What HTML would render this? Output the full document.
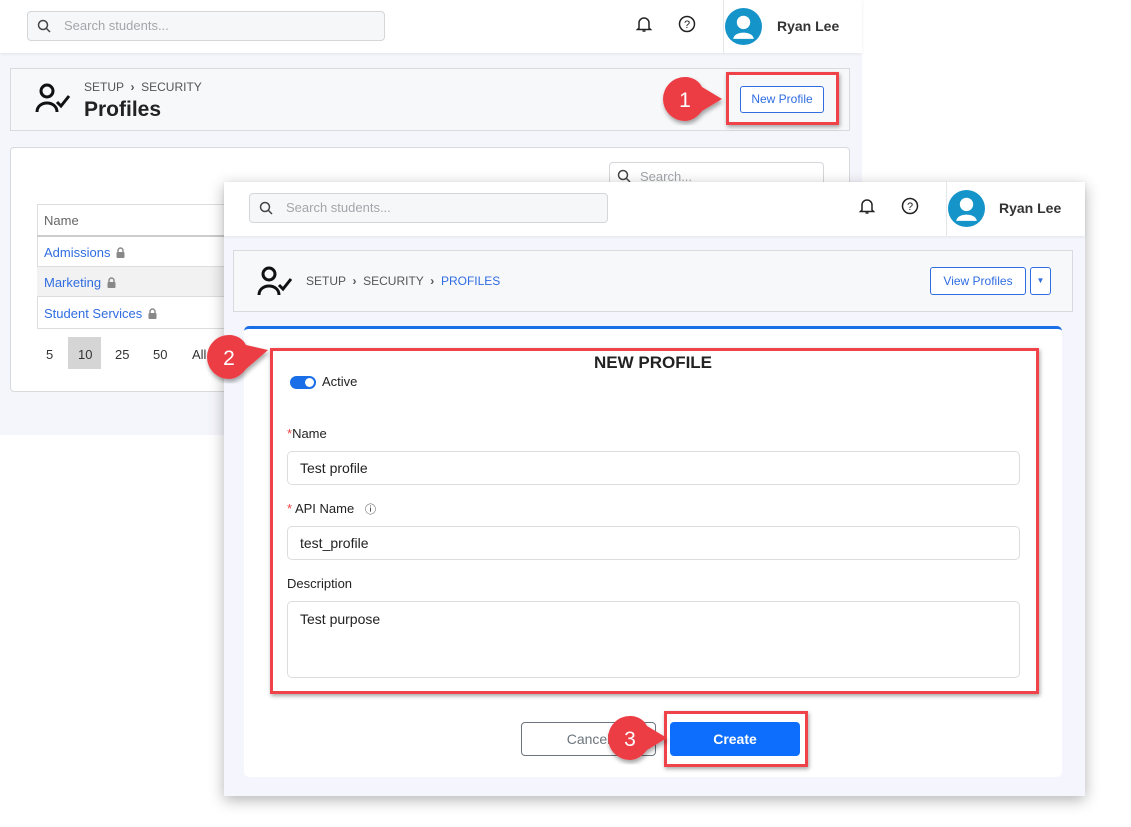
<!DOCTYPE html>
<html><head><meta charset="utf-8"><style>
*{box-sizing:border-box;margin:0;padding:0}
body{width:1131px;height:827px;position:relative;background:#fff;font-family:"Liberation Sans",sans-serif;overflow:hidden;color:#222}
.a{position:absolute}
.t{position:absolute;white-space:nowrap}
.srch{position:absolute;border:1px solid #d4d6da;border-radius:4px;background:#f6f7f9;color:#a3a6ab;font-size:13px;padding-left:36px;line-height:28px}
.red{position:absolute;border:3px solid #ef4349;box-shadow:1px 2px 4px rgba(0,0,0,.35)}
.inp{position:absolute;border:1px solid #dcdde0;border-radius:5px;background:#fff;font-size:14px;padding-left:12px;color:#222}
.lk{display:inline-block;vertical-align:-1px;margin-left:6px}
</style></head><body>
<div class="a" style="left:0;top:0;width:862px;height:435px;background:#f5f6fc"></div>
<div class="a" style="left:0;top:0;width:862px;height:53px;background:#fff;box-shadow:0 1px 3px rgba(0,0,0,.08)"></div>
<div class="srch" style="left:27px;top:11px;width:358px;height:30px">Search students...</div>
<svg class="a" style="left:37px;top:19px" width="14" height="14" viewBox="0 0 14 14"><circle cx="6" cy="6" r="4.5" fill="none" stroke="#444" stroke-width="1.5"/><path d="M9.5 9.5L13 13" stroke="#444" stroke-width="1.5"/></svg>
<svg class="a" style="left:635px;top:15px" width="18" height="18" viewBox="0 0 18 18"><path d="M4 13V8a5 5 0 0110 0v5l1.5 1.5h-13z" fill="none" stroke="#222" stroke-width="1.5"/><path d="M7.5 16h3" stroke="#222" stroke-width="1.5"/></svg>
<svg class="a" style="left:678px;top:15px" width="18" height="18" viewBox="0 0 18 18"><circle cx="9" cy="9" r="7.5" fill="none" stroke="#222" stroke-width="1.5"/><text x="9" y="13" font-size="11" text-anchor="middle" font-family="Liberation Sans" fill="#222">?</text></svg>
<div class="a" style="left:723px;top:0;width:1px;height:53px;background:#e5e6ea"></div>
<svg class="a" style="left:725px;top:8px" width="37" height="37" viewBox="0 0 36 36"><circle cx="18" cy="18" r="18" fill="#1594c9"/><circle cx="18" cy="14" r="6.5" fill="#fff"/><path d="M8 30c1-8 19-8 20 0z" fill="#fff"/></svg>
<div class="t" style="left:777px;top:18px;font-size:14px;font-weight:bold;color:#333">Ryan Lee</div>
<div class="a" style="left:10px;top:68px;width:840px;height:63px;background:#f7f8fa;border:1px solid #d9dadd"></div>
<svg class="a" style="left:34px;top:82px" width="40" height="32" viewBox="0 0 40 32"><circle cx="13" cy="9" r="6" fill="none" stroke="#111" stroke-width="3"/><path d="M3 30c0-12 20-12 20 0" fill="none" stroke="#111" stroke-width="3"/><path d="M23 20l4 4 8-10" fill="none" stroke="#111" stroke-width="3"/></svg>
<div class="t" style="left:84px;top:80px;font-size:12px;color:#555">SETUP &nbsp;<b>›</b>&nbsp; SECURITY</div>
<div class="t" style="left:84px;top:98px;font-size:21px;font-weight:bold;color:#222">Profiles</div>
<div class="a" style="left:740px;top:86px;width:84px;height:27px;border:1px solid #2f6de1;border-radius:3px;background:#fff;color:#2f6de1;font-size:12px;text-align:center;line-height:25px">New Profile</div>
<div class="red" style="left:726px;top:72px;width:113px;height:53px"></div>
<div class="a" style="left:10px;top:147px;width:840px;height:245px;background:#fff;border:1px solid #d9dadd;border-radius:4px"></div>
<div class="srch" style="left:609px;top:162px;width:215px;height:28px;background:#fff;padding-left:30px">Search...</div>
<svg class="a" style="left:617px;top:169px" width="14" height="14" viewBox="0 0 14 14"><circle cx="6" cy="6" r="4.5" fill="none" stroke="#444" stroke-width="1.5"/><path d="M9.5 9.5L13 13" stroke="#444" stroke-width="1.5"/></svg>
<div class="a" style="left:37px;top:204px;width:200px;height:124px;border-left:1px solid #ddd"></div>
<div class="a" style="left:37px;top:204px;width:200px;height:1px;background:#ddd"></div>
<div class="a" style="left:37px;top:235px;width:200px;height:2px;background:#ccc"></div>
<div class="a" style="left:37px;top:266px;width:200px;height:31px;background:#f2f2f2;border-top:1px solid #ddd;border-bottom:1px solid #ddd"></div>
<div class="a" style="left:37px;top:328px;width:200px;height:1px;background:#ddd"></div>
<div class="t" style="left:44px;top:213px;font-size:13px;color:#666">Name</div>
<div class="t" style="left:44px;top:245px;font-size:13px;color:#2f6de1">Admissions<svg class="lk" width="9" height="11" viewBox="0 0 9 11"><path d="M2 5V3.5a2.5 2.5 0 015 0V5" fill="none" stroke="#888" stroke-width="1.4"/><rect x="0.5" y="5" width="8" height="6" rx="1" fill="#888"/></svg></div>
<div class="t" style="left:44px;top:275px;font-size:13px;color:#2f6de1">Marketing<svg class="lk" width="9" height="11" viewBox="0 0 9 11"><path d="M2 5V3.5a2.5 2.5 0 015 0V5" fill="none" stroke="#888" stroke-width="1.4"/><rect x="0.5" y="5" width="8" height="6" rx="1" fill="#888"/></svg></div>
<div class="t" style="left:44px;top:306px;font-size:13px;color:#2f6de1">Student Services<svg class="lk" width="9" height="11" viewBox="0 0 9 11"><path d="M2 5V3.5a2.5 2.5 0 015 0V5" fill="none" stroke="#888" stroke-width="1.4"/><rect x="0.5" y="5" width="8" height="6" rx="1" fill="#888"/></svg></div>
<div class="a" style="left:68px;top:337px;width:33px;height:32px;background:#d5d5d5"></div>
<div class="t" style="left:46px;top:347px;font-size:13px;color:#333">5</div>
<div class="t" style="left:78px;top:347px;font-size:13px;color:#333">10</div>
<div class="t" style="left:115px;top:347px;font-size:13px;color:#333">25</div>
<div class="t" style="left:153px;top:347px;font-size:13px;color:#333">50</div>
<div class="t" style="left:192px;top:347px;font-size:13px;color:#333">All</div>

<div class="a" style="left:224px;top:182px;width:861px;height:614px;background:#f5f6fd;box-shadow:0 4px 14px rgba(0,0,0,.3)"></div>
<div class="a" style="left:224px;top:182px;width:861px;height:54px;background:#fff;box-shadow:0 1px 3px rgba(0,0,0,.08)"></div>
<div class="srch" style="left:249px;top:193px;width:359px;height:30px">Search students...</div>
<svg class="a" style="left:259px;top:201px" width="14" height="14" viewBox="0 0 14 14"><circle cx="6" cy="6" r="4.5" fill="none" stroke="#444" stroke-width="1.5"/><path d="M9.5 9.5L13 13" stroke="#444" stroke-width="1.5"/></svg>
<svg class="a" style="left:858px;top:197px" width="18" height="18" viewBox="0 0 18 18"><path d="M4 13V8a5 5 0 0110 0v5l1.5 1.5h-13z" fill="none" stroke="#222" stroke-width="1.5"/><path d="M7.5 16h3" stroke="#222" stroke-width="1.5"/></svg>
<svg class="a" style="left:901px;top:197px" width="18" height="18" viewBox="0 0 18 18"><circle cx="9" cy="9" r="7.5" fill="none" stroke="#222" stroke-width="1.5"/><text x="9" y="13" font-size="11" text-anchor="middle" font-family="Liberation Sans" fill="#222">?</text></svg>
<div class="a" style="left:946px;top:182px;width:1px;height:54px;background:#e5e6ea"></div>
<svg class="a" style="left:948px;top:190px" width="37" height="37" viewBox="0 0 36 36"><circle cx="18" cy="18" r="18" fill="#1594c9"/><circle cx="18" cy="14" r="6.5" fill="#fff"/><path d="M8 30c1-8 19-8 20 0z" fill="#fff"/></svg>
<div class="t" style="left:999px;top:200px;font-size:14px;font-weight:bold;color:#333">Ryan Lee</div>
<div class="a" style="left:233px;top:250px;width:840px;height:62px;background:#f7f8fa;border:1px solid #d9dadd"></div>
<svg class="a" style="left:256px;top:265px" width="40" height="32" viewBox="0 0 40 32"><circle cx="13" cy="9" r="6" fill="none" stroke="#111" stroke-width="3"/><path d="M3 30c0-12 20-12 20 0" fill="none" stroke="#111" stroke-width="3"/><path d="M23 20l4 4 8-10" fill="none" stroke="#111" stroke-width="3"/></svg>
<div class="t" style="left:306px;top:274px;font-size:12px;color:#555">SETUP &nbsp;<b>›</b>&nbsp; SECURITY &nbsp;<b>›</b>&nbsp; <span style="color:#2f6de1">PROFILES</span></div>
<div class="a" style="left:930px;top:267px;width:96px;height:28px;border:1px solid #2f6de1;border-radius:3px;background:#fff;color:#2f6de1;font-size:12px;text-align:center;line-height:26px">View Profiles</div>
<div class="a" style="left:1030px;top:267px;width:21px;height:28px;border:1px solid #2f6de1;border-radius:3px;background:#fff;color:#2f6de1;font-size:8px;text-align:center;line-height:26px">▼</div>
<div class="a" style="left:244px;top:326px;width:818px;height:451px;background:#fff;border-top:3px solid #1a6fe8;border-radius:5px"></div>
<div class="t" style="left:0;width:1306px;text-align:center;top:353px;font-size:17px;font-weight:bold;color:#222">NEW PROFILE</div>
<div class="a" style="left:290px;top:376px;width:26px;height:13px;border-radius:7px;background:#1a6fe8"></div>
<div class="a" style="left:305px;top:378px;width:9px;height:9px;border-radius:50%;background:#fff"></div>
<div class="t" style="left:322px;top:374px;font-size:13px;color:#222">Active</div>
<div class="t" style="left:287px;top:426px;font-size:13px;color:#222"><span style="color:#e44">*</span>Name</div>
<div class="inp" style="left:287px;top:451px;width:733px;height:34px;line-height:32px">Test profile</div>
<div class="t" style="left:287px;top:501px;font-size:13px;color:#222"><span style="color:#e44">*</span> API Name &nbsp; <span style="font-size:11px">ⓘ</span></div>
<div class="inp" style="left:287px;top:526px;width:733px;height:34px;line-height:32px">test_profile</div>
<div class="t" style="left:287px;top:576px;font-size:13px;color:#222">Description</div>
<div class="inp" style="left:287px;top:601px;width:733px;height:77px;padding-top:9px;line-height:16px">Test purpose</div>
<div class="red" style="left:270px;top:348px;width:769px;height:346px"></div>
<div class="a" style="left:521px;top:722px;width:135px;height:34px;border:1px solid #6c757d;border-radius:4px;background:#fff;color:#6c757d;font-size:14px;text-align:center;line-height:32px">Cancel</div>
<div class="a" style="left:670px;top:722px;width:130px;height:34px;border-radius:4px;background:#0d6efd;color:#fff;font-size:14px;font-weight:bold;text-align:center;line-height:34px">Create</div>
<div class="red" style="left:664px;top:711px;width:144px;height:56px"></div>

<svg class="a" style="left:655px;top:72px" width="75" height="56" viewBox="0 0 75 56"><defs><filter id="s"><feDropShadow dx="1" dy="3" stdDeviation="2" flood-opacity=".35"/></filter></defs><path d="M30 5a22 22 0 100 44c8 0 14-6 17-10l20-12-20-12C44 9 38 5 30 5z" fill="#ec3e45" filter="url(#s)"/><text x="30" y="35" font-size="21" text-anchor="middle" fill="#fff" font-family="Liberation Sans">1</text></svg>
<svg class="a" style="left:199px;top:330px" width="75" height="56" viewBox="0 0 75 56"><path d="M30 5a22 22 0 100 44c8 0 14-6 17-10l22-19-22-5C44 9 38 5 30 5z" fill="#ec3e45" filter="url(#s)"/><text x="30" y="35" font-size="21" text-anchor="middle" fill="#fff" font-family="Liberation Sans">2</text></svg>
<svg class="a" style="left:600px;top:711px" width="75" height="56" viewBox="0 0 75 56"><path d="M30 5a22 22 0 100 44c8 0 14-6 17-10l20-12-20-12C44 9 38 5 30 5z" fill="#ec3e45" filter="url(#s)"/><text x="30" y="35" font-size="21" text-anchor="middle" fill="#fff" font-family="Liberation Sans">3</text></svg>
</body></html>
